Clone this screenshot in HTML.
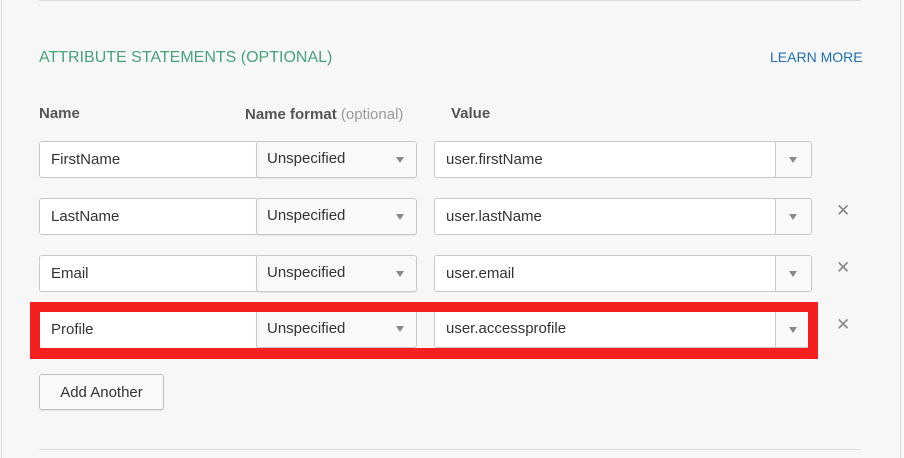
<!DOCTYPE html>
<html><head><style>
html,body{margin:0;padding:0}
body{width:904px;height:458px;background:#f7f7f7;position:relative;overflow:hidden;font-family:"Liberation Sans",sans-serif;color:#333}
.a{position:absolute}
.inp{position:absolute;background:#fff;border:1px solid #c8c8c8;border-radius:3px;box-sizing:border-box;font-size:15px;color:#333;padding-left:11px;line-height:36px}
.sel{position:absolute;background:#f9f9f9;border:1px solid #c8c8c8;border-radius:3px;box-sizing:border-box;font-size:15px;color:#333;padding-left:10px;line-height:34px;box-shadow:0 1px 1px rgba(0,0,0,.08)}
.tri{position:absolute;width:0;height:0;border-left:4px solid transparent;border-right:4px solid transparent;border-top:6px solid #888}
.arr{position:absolute;border-left:1px solid #c8c8c8;background:#f9f9f9;top:0;bottom:0;right:0;width:35px;border-radius:0 3px 3px 0}
.x{position:absolute;font-size:17px;color:#888;left:836px}
</style></head><body>
<div class="a" style="left:39px;top:0;width:822px;height:1px;background:#ddd"></div>
<div class="a" style="left:1px;top:0;width:1px;height:458px;background:#ddd"></div>
<div class="a" style="left:900px;top:0;width:1px;height:458px;background:#ddd"></div>
<div class="a" style="left:39px;top:449px;width:822px;height:1px;background:#ddd"></div>
<div class="a" style="left:39px;top:49px;font-size:16px;color:#46a37a">ATTRIBUTE STATEMENTS (OPTIONAL)</div>
<div class="a" style="left:770px;top:49px;font-size:14px;color:#1f6fb5">LEARN MORE</div>
<div class="a" style="left:39px;top:105px;font-size:15px;font-weight:bold;color:#555">Name</div>
<div class="a" style="left:245px;top:106px;font-size:15px;font-weight:bold;color:#555">Name format <span style="font-weight:normal;color:#999">(optional)</span></div>
<div class="a" style="left:451px;top:105px;font-size:15px;font-weight:bold;color:#555">Value</div>

<div class="inp" style="left:39px;top:141px;width:220px;height:37px">FirstName</div>
<div class="sel" style="left:256px;top:141px;width:161px;height:37px">Unspecified<div class="tri" style="left:139px;top:15px"></div></div>
<div class="inp" style="left:434px;top:141px;width:378px;height:37px">user.firstName<div class="arr"><div class="tri" style="left:13px;top:15px"></div></div></div>

<div class="inp" style="left:39px;top:198px;width:220px;height:37px">LastName</div>
<div class="sel" style="left:256px;top:198px;width:161px;height:37px">Unspecified<div class="tri" style="left:139px;top:15px"></div></div>
<div class="inp" style="left:434px;top:198px;width:378px;height:37px">user.lastName<div class="arr"><div class="tri" style="left:13px;top:15px"></div></div></div>
<div class="x" style="top:201px">✕</div>

<div class="inp" style="left:39px;top:255px;width:220px;height:37px">Email</div>
<div class="sel" style="left:256px;top:255px;width:161px;height:37px">Unspecified<div class="tri" style="left:139px;top:15px"></div></div>
<div class="inp" style="left:434px;top:255px;width:378px;height:37px">user.email<div class="arr"><div class="tri" style="left:13px;top:15px"></div></div></div>
<div class="x" style="top:258px">✕</div>

<div class="inp" style="left:39px;top:310px;width:220px;height:39px;line-height:38px">Profile</div>
<div class="sel" style="left:256px;top:310px;width:161px;height:38px;line-height:35px">Unspecified<div class="tri" style="left:139px;top:15px"></div></div>
<div class="inp" style="left:434px;top:310px;width:378px;height:38px;line-height:36px">user.accessprofile<div class="arr"><div class="tri" style="left:13px;top:16px"></div></div></div>
<div class="x" style="top:315px">✕</div>
<div class="a" style="left:30px;top:302px;width:788px;height:57px;box-sizing:border-box;border:10px solid #f41f1f;border-bottom-width:11px"></div>

<div class="a" style="left:39px;top:374px;width:125px;height:36px;box-sizing:border-box;border:1px solid #c0c0c0;border-radius:3px;background:#f9f9f9;font-size:15px;line-height:36px;text-align:center;color:#333;box-shadow:0 1px 1px rgba(0,0,0,.08)">Add Another</div>
</body></html>
